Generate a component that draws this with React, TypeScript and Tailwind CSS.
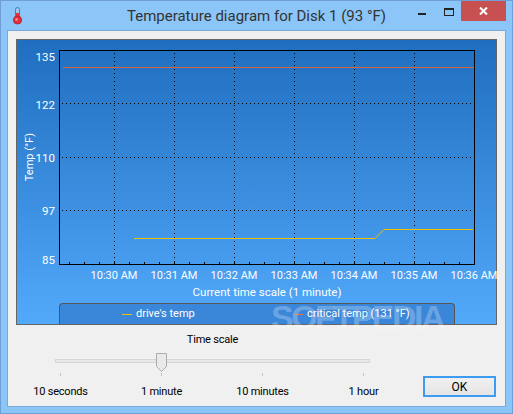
const FONT = "font-['Roboto','Noto_Sans',sans-serif]";

const yTicks = [
  { label: "135", cls: "mt-[-1px]" },
  { label: "122", cls: "mt-[32px]" },
  { label: "110", cls: "mt-[37px]" },
  { label: "97", cls: "mt-[37px]" },
  { label: "85", cls: "mt-[33px]" },
];
const xLabels = ["10:30 AM", "10:31 AM", "10:32 AM", "10:33 AM", "10:34 AM", "10:35 AM", "10:36 AM"];
const sliderStops = ["10 seconds", "1 minute", "10 minutes", "1 hour"];

function Thermometer() {
  return (
    <svg width="9" height="18" viewBox="0 0 9 18" aria-hidden>
      <rect x="2.5" y="0.5" width="4" height="11" rx="2" fill="#9fc8ea" stroke="#3f7fc0" />
      <rect x="3" y="6" width="3" height="7" fill="#e8303a" />
      <circle cx="4.5" cy="13" r="4" fill="#e8303a" stroke="#b8202c" />
      <circle cx="3.5" cy="12.5" r="1.2" fill="#f79aa0" />
    </svg>
  );
}

function Plot() {
  const vGrid = [55, 115, 175, 235, 295, 355];
  const hGrid = [53.5, 107.5, 160.5];
  const minor: number[] = [];
  for (let x = 10; x < 416; x += 15) minor.push(x);
  return (
    <svg width="416" height="215" viewBox="0 0 416 215" className="block shrink-0">
      {vGrid.map((x) => (
        <line key={x} x1={x + 0.5} y1="3" x2={x + 0.5} y2="214" stroke="#000" strokeDasharray="1 3" />
      ))}
      {hGrid.map((y) => (
        <line key={y} x1="3" y1={y} x2="413" y2={y} stroke="#000" strokeDasharray="1 3" />
      ))}
      {minor.map((x) => (
        <line key={x} x1={x + 0.5} y1="212" x2={x + 0.5} y2="214" stroke="#000" />
      ))}
      <line x1="4" y1="17.5" x2="415" y2="17.5" stroke="#d8623a" />
      <polyline points="75,188.5 316,188.5 325,179.5 414,179.5" fill="none" stroke="#f2c200" />
      <rect x="0.5" y="0.5" width="415" height="214" fill="none" stroke="#000" />
    </svg>
  );
}

export default function App() {
  return (
    <div className={`${FONT} relative flex h-[414px] w-[513px] flex-col overflow-hidden border border-[#6f9fd4] bg-[#8cc6f8] text-[11px]`}>
      <div className="grid h-[29px] grid-cols-[1fr_auto_1fr]">
        <div className="flex items-start pl-[12px] pt-[6px]">
          <Thermometer />
        </div>
        <div className="pt-[4px] text-[15px] leading-[22px] text-[#333]">Temperature diagram for Disk 1 (93 °F)</div>
        <div className="flex items-start justify-end pr-[6px]">
          <div className="mr-[18px] mt-[12px] h-[2px] w-[8px] bg-[#222]" />
          <div className="mr-[7px] mt-[7px] h-[8px] w-[10px] border border-t-2 border-[#222]" />
          <div className="flex h-[20px] w-[45px] items-center justify-center bg-[#c75050]">
            <svg width="9" height="8" viewBox="0 0 9 8" aria-hidden>
              <path d="M1 0.5 8 7.5M8 0.5 1 7.5" stroke="#fff" strokeWidth="2" />
            </svg>
          </div>
        </div>
      </div>

      <div className="mx-[6px] flex h-[377px] flex-col border border-[#78a8dc] bg-[#f0f0f0] text-black">
        <div className="mx-[8px] mt-[8px] flex h-[286px] flex-col border border-[#666] bg-gradient-to-b from-[#1f6ebf] to-[#52a9fa] text-white">
          <div className="mt-[10px] flex">
            <div className="flex h-[215px] w-[24px] items-center justify-center">
              <span className="rotate-180 whitespace-nowrap leading-none [writing-mode:vertical-rl]">Temp (°F)</span>
            </div>
            <div className="flex w-[18px] flex-col items-end pr-[4px]">
              {yTicks.map((t) => (
                <div key={t.label} className={`h-[16px] whitespace-nowrap text-[11.5px] leading-[16px] ${t.cls}`}>
                  {t.label}
                </div>
              ))}
            </div>
            <Plot />
          </div>
          <div className="ml-[67px] flex h-[18px] items-center">
            {xLabels.map((l) => (
              <div key={l} className="w-[60px] shrink-0 whitespace-nowrap text-center leading-[16px]">
                {l}
              </div>
            ))}
          </div>
          <div className="ml-[42px] h-[16px] w-[416px] text-center text-[11.5px] leading-[16px]">Current time scale (1 minute)</div>
          <div className="ml-[42px] mt-[3px] flex h-[23px] w-[396px] items-center rounded-t-[4px] border border-b-0 border-[#555] bg-[#3a86d9]">
            <div className="ml-[62px] h-px w-[10px] bg-[#f2c200]" />
            <div className="ml-[4px] w-[157px] whitespace-nowrap">drive's temp</div>
            <div className="h-px w-[10px] bg-[#e8703a]" />
            <div className="ml-[4px] whitespace-nowrap">critical temp (131 °F)</div>
          </div>
        </div>

        <div className="flex flex-1 justify-between pr-[9px]">
          <div className="ml-[47px] flex w-[315px] flex-col tracking-[-0.2px]">
            <div className="mt-[7px] text-center leading-[16px]">Time scale</div>
            <div className="relative mt-[5px] h-[20px]">
              <div className="mt-[6px] h-[4px] border border-[#d6d6d6] bg-[#e7e7e7]" />
              <svg width="11" height="19" viewBox="0 0 11 19" className="absolute left-[101px] top-0" aria-hidden>
                <path d="M0.5 0.5H10.5V13.5L5.5 18.5L0.5 13.5Z" fill="#e9e9e9" stroke="#acacac" />
              </svg>
            </div>
            <div className="-ml-[45px] grid w-[404px] grid-cols-4">
              {sliderStops.map((s) => (
                <div key={s} className="flex flex-col items-center">
                  <div className="h-[3px] w-px bg-[#c4c4c4]" />
                  <div className="mt-[8px] whitespace-nowrap leading-[16px]">{s}</div>
                </div>
              ))}
            </div>
          </div>
          <button
            type="button"
            className="mb-[9px] flex h-[21px] w-[73px] items-center justify-center self-end border-2 border-[#3d9bf0] bg-gradient-to-b from-[#f0f0f0] to-[#e5e5e5] text-[12px]"
          >
            OK
          </button>
        </div>
      </div>

      <div className="pointer-events-none absolute left-[270px] top-[296px] whitespace-nowrap font-['Liberation_Sans',sans-serif] text-[34px] font-bold leading-[40px] tracking-[-2.5px] text-white/25">
        SOFTPEDIA
      </div>
    </div>
  );
}
